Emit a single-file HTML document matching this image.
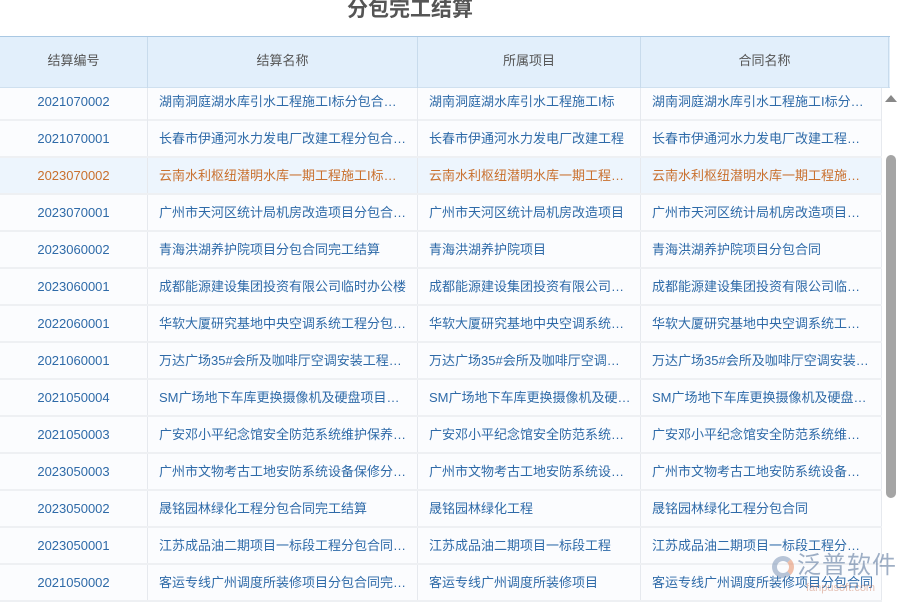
<!DOCTYPE html>
<html><head><meta charset="utf-8"><style>
*{margin:0;padding:0;box-sizing:border-box}
body{width:900px;height:600px;overflow:hidden;background:#fff;font-family:"Liberation Sans","Noto Sans CJK SC",sans-serif;position:relative}
.title{position:absolute;top:-4px;left:0;width:820px;text-align:center;font-size:21px;font-weight:bold;color:#555;line-height:28px}
.hdr{position:absolute;top:36px;left:0;width:890px;height:52px;background:#e2effb;border-top:1px solid #a9c8e3;border-bottom:1px solid #cfe0ef}
.hdr div{position:absolute;top:0;height:51px;line-height:48px;text-align:center;font-size:13px;color:#555;border-right:1px solid #c8dbec}
.row{position:absolute;left:0;width:882px;height:37px;background:#fbfcfe;border-bottom:2px solid #eef0f3}
.row div{position:absolute;top:0;height:35px;line-height:36px;font-size:13px;color:#2e6aa8;white-space:nowrap;overflow:hidden;text-overflow:ellipsis;border-right:1px solid #e6e9ee}
.row.h{background:#edf5fd}
.row.h div{color:#c9702e}
.c1{left:0;width:148px;text-align:center}
.c2{left:148px;width:270px;padding-left:11px;padding-right:10px}
.c3{left:418px;width:223px;padding-left:11px;padding-right:8px}
.c4{left:641px;width:241px;padding-left:11px;padding-right:8px}
.sb{position:absolute;left:882px;top:88px;width:18px;height:512px;background:#fff}
.thumb{position:absolute;left:886px;top:155px;width:10px;height:343px;background:#a5a5a5;border-radius:5px}
.arr{position:absolute;left:885px;top:95px;width:0;height:0;border-left:6px solid transparent;border-right:6px solid transparent;border-bottom:7px solid #888}
.wm{position:absolute;left:797px;top:552px;font-size:24px;color:rgba(80,110,150,.55);letter-spacing:1px;line-height:28px}
.logo{position:absolute;left:772px;top:556px;width:22px;height:22px;border-radius:50%;border:5px solid rgba(100,130,170,.45);border-right-color:rgba(230,140,100,.55)}
.wm2{position:absolute;left:806px;top:582px;font-size:11px;color:rgba(200,120,90,.45)}
</style></head><body>
<div class="title">分包完工结算</div>
<div class="hdr">
<div style="left:0;width:148px">结算编号</div>
<div style="left:148px;width:270px">结算名称</div>
<div style="left:418px;width:223px">所属项目</div>
<div style="left:641px;width:248px">合同名称</div>
</div>

<div class="row" style="top:88px;height:33px"><div class="c1" style="line-height:27px">2021070002</div><div class="c2" style="line-height:27px">湖南洞庭湖水库引水工程施工I标分包合同完工结算</div><div class="c3" style="line-height:27px">湖南洞庭湖水库引水工程施工I标</div><div class="c4" style="line-height:27px">湖南洞庭湖水库引水工程施工I标分包合同</div></div>
<div class="row" style="top:121px"><div class="c1">2021070001</div><div class="c2">长春市伊通河水力发电厂改建工程分包合同完工结算</div><div class="c3">长春市伊通河水力发电厂改建工程</div><div class="c4">长春市伊通河水力发电厂改建工程分包合同</div></div>
<div class="row h" style="top:158px"><div class="c1">2023070002</div><div class="c2">云南水利枢纽潜明水库一期工程施工I标分包</div><div class="c3">云南水利枢纽潜明水库一期工程施工</div><div class="c4">云南水利枢纽潜明水库一期工程施工I标分包</div></div>
<div class="row" style="top:195px"><div class="c1">2023070001</div><div class="c2">广州市天河区统计局机房改造项目分包合同完工</div><div class="c3">广州市天河区统计局机房改造项目</div><div class="c4">广州市天河区统计局机房改造项目分包合同</div></div>
<div class="row" style="top:232px"><div class="c1">2023060002</div><div class="c2">青海洪湖养护院项目分包合同完工结算</div><div class="c3">青海洪湖养护院项目</div><div class="c4">青海洪湖养护院项目分包合同</div></div>
<div class="row" style="top:269px"><div class="c1">2023060001</div><div class="c2">成都能源建设集团投资有限公司临时办公楼</div><div class="c3">成都能源建设集团投资有限公司临时</div><div class="c4">成都能源建设集团投资有限公司临时办公楼</div></div>
<div class="row" style="top:306px"><div class="c1">2022060001</div><div class="c2">华软大厦研究基地中央空调系统工程分包合同</div><div class="c3">华软大厦研究基地中央空调系统工程</div><div class="c4">华软大厦研究基地中央空调系统工程分包</div></div>
<div class="row" style="top:343px"><div class="c1">2021060001</div><div class="c2">万达广场35#会所及咖啡厅空调安装工程分包</div><div class="c3">万达广场35#会所及咖啡厅空调安装</div><div class="c4">万达广场35#会所及咖啡厅空调安装工程</div></div>
<div class="row" style="top:380px"><div class="c1">2021050004</div><div class="c2">SM广场地下车库更换摄像机及硬盘项目分包</div><div class="c3">SM广场地下车库更换摄像机及硬盘项目</div><div class="c4">SM广场地下车库更换摄像机及硬盘项目</div></div>
<div class="row" style="top:417px"><div class="c1">2021050003</div><div class="c2">广安邓小平纪念馆安全防范系统维护保养分包</div><div class="c3">广安邓小平纪念馆安全防范系统维护</div><div class="c4">广安邓小平纪念馆安全防范系统维护保养</div></div>
<div class="row" style="top:454px"><div class="c1">2023050003</div><div class="c2">广州市文物考古工地安防系统设备保修分包合同</div><div class="c3">广州市文物考古工地安防系统设备保修</div><div class="c4">广州市文物考古工地安防系统设备保修分包</div></div>
<div class="row" style="top:491px"><div class="c1">2023050002</div><div class="c2">晟铭园林绿化工程分包合同完工结算</div><div class="c3">晟铭园林绿化工程</div><div class="c4">晟铭园林绿化工程分包合同</div></div>
<div class="row" style="top:528px"><div class="c1">2023050001</div><div class="c2">江苏成品油二期项目一标段工程分包合同完工</div><div class="c3">江苏成品油二期项目一标段工程</div><div class="c4">江苏成品油二期项目一标段工程分包合同</div></div>
<div class="row" style="top:565px"><div class="c1">2021050002</div><div class="c2">客运专线广州调度所装修项目分包合同完工结算</div><div class="c3">客运专线广州调度所装修项目</div><div class="c4">客运专线广州调度所装修项目分包合同</div></div>

<div class="sb"></div>
<div class="arr"></div>
<div class="thumb"></div>
<div class="logo"></div>
<div class="wm">泛普软件</div>
<div class="wm2">fanpusoft.com</div>
</body></html>
